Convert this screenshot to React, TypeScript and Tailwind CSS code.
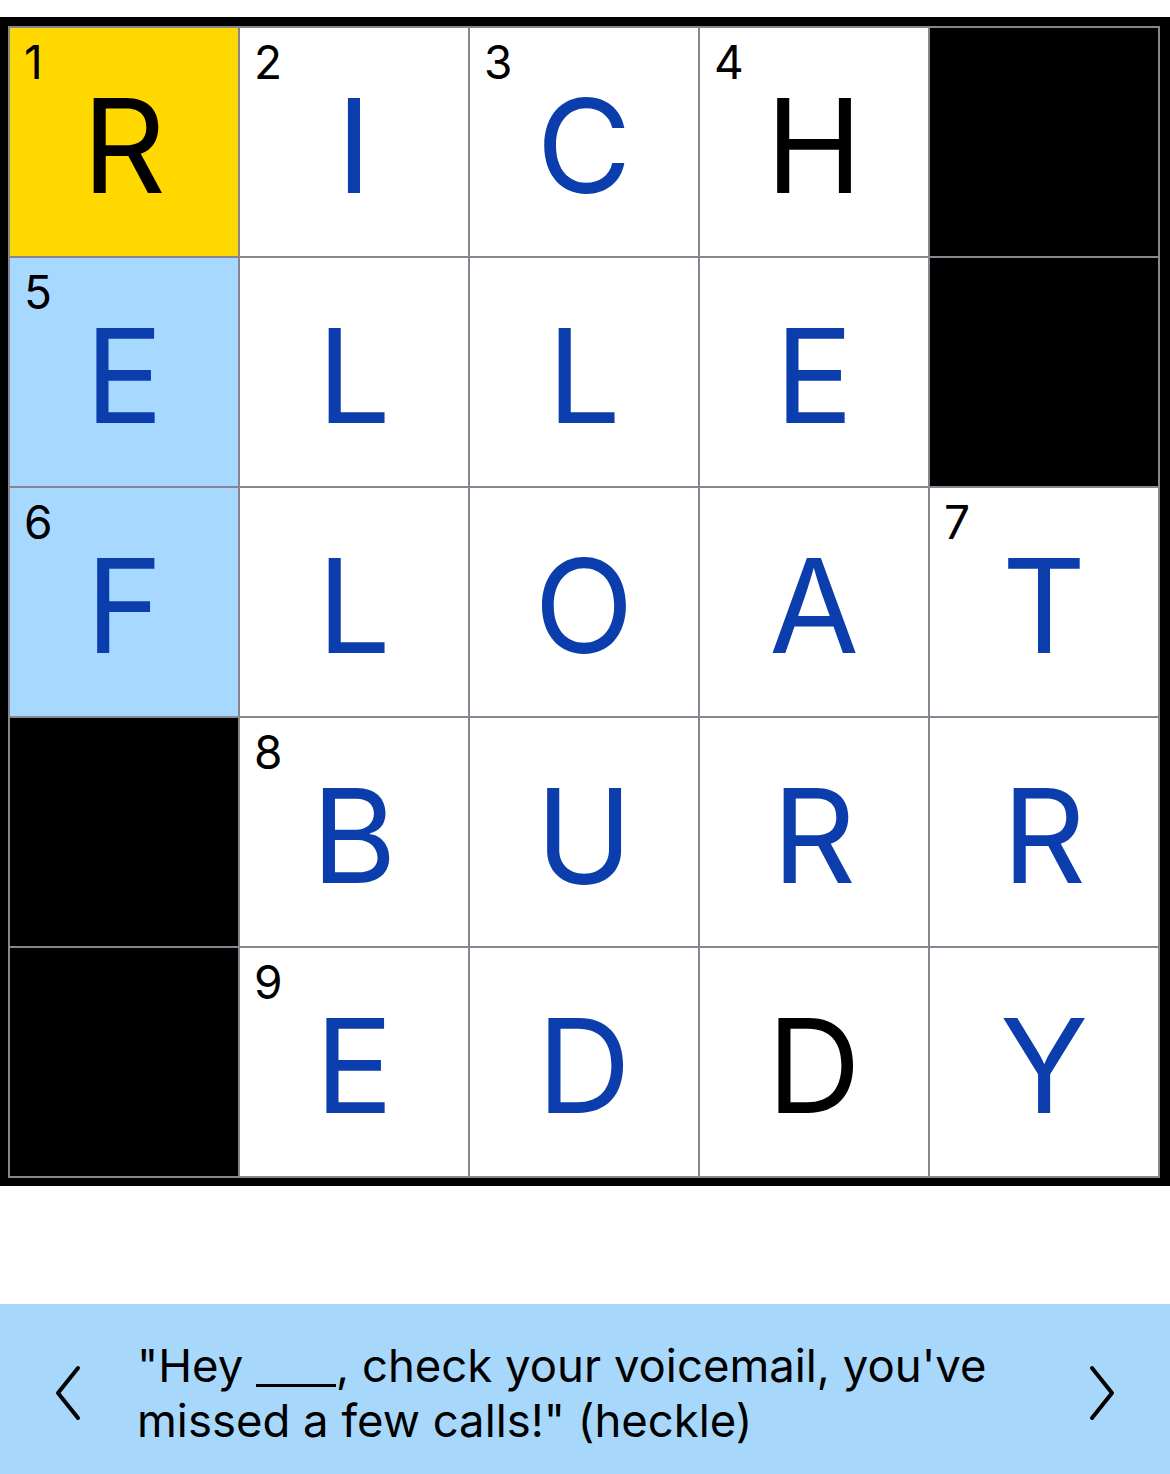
import React from "react";

type Cell = { n?: number; ch?: string; block?: boolean; bg?: string; dark?: boolean };

const rows: Cell[][] = [
  [
    { n: 1, ch: "R", bg: "bg-[#ffd800]", dark: true },
    { n: 2, ch: "I" },
    { n: 3, ch: "C" },
    { n: 4, ch: "H", dark: true },
    { block: true },
  ],
  [
    { n: 5, ch: "E", bg: "bg-[#a7d8ff]" },
    { ch: "L" },
    { ch: "L" },
    { ch: "E" },
    { block: true },
  ],
  [
    { n: 6, ch: "F", bg: "bg-[#a7d8ff]" },
    { ch: "L" },
    { ch: "O" },
    { ch: "A" },
    { n: 7, ch: "T" },
  ],
  [{ block: true }, { n: 8, ch: "B" }, { ch: "U" }, { ch: "R" }, { ch: "R" }],
  [{ block: true }, { n: 9, ch: "E" }, { ch: "D" }, { ch: "D", dark: true }, { ch: "Y" }],
];

function Square({ cell }: { cell: Cell }) {
  if (cell.block) return <div className="h-[228px] w-[228px] bg-black" />;
  return (
    <div className={`relative flex h-[228px] w-[228px] items-end justify-center ${cell.bg ?? "bg-white"}`}>
      {cell.n && (
        <span className="absolute left-[14px] top-[11px] text-[46px] leading-none text-black">{cell.n}</span>
      )}
      <span
        className={`pb-[45px] text-[130px] leading-none ${cell.dark ? "text-black" : "text-[#0b3dac]"}`}
      >
        {cell.ch}
      </span>
    </div>
  );
}

function Chevron({ dir }: { dir: "left" | "right" }) {
  return (
    <svg width="26" height="56" viewBox="0 0 26 56" fill="none" className="shrink-0">
      <path
        d={dir === "left" ? "M23 3 L3 28 L23 53" : "M3 3 L23 28 L3 53"}
        stroke="black"
        strokeWidth="4"
        strokeLinecap="round"
        strokeLinejoin="round"
      />
    </svg>
  );
}

export default function App() {
  return (
    <div className="w-[1170px] bg-white font-['Inter',sans-serif]">
      <div className="mt-[17px] bg-black pb-[8px] pl-[8px] pr-[10px] pt-[9px]">
        <div className="grid grid-cols-5 gap-[2px] bg-[#87858e] p-[2px]">
          {rows.flat().map((c, i) => (
            <Square key={i} cell={c} />
          ))}
        </div>
      </div>

      <div className="mt-[118px] flex h-[170px] items-center bg-[#a7d8fb] pl-[55px] pr-[55px] pt-[8px]">
        <Chevron dir="left" />
        <p className="-mt-[1px] ml-[56px] w-[900px] text-[45.5px] leading-[55px] text-black">
          "Hey <span className="inline-block w-[80px] translate-y-[5px] border-b-[3px] border-black" />, check
          your voicemail, you've
          <br />
          missed a few calls!" (heckle)
        </p>
        <div className="ml-auto">
          <Chevron dir="right" />
        </div>
      </div>
    </div>
  );
}
